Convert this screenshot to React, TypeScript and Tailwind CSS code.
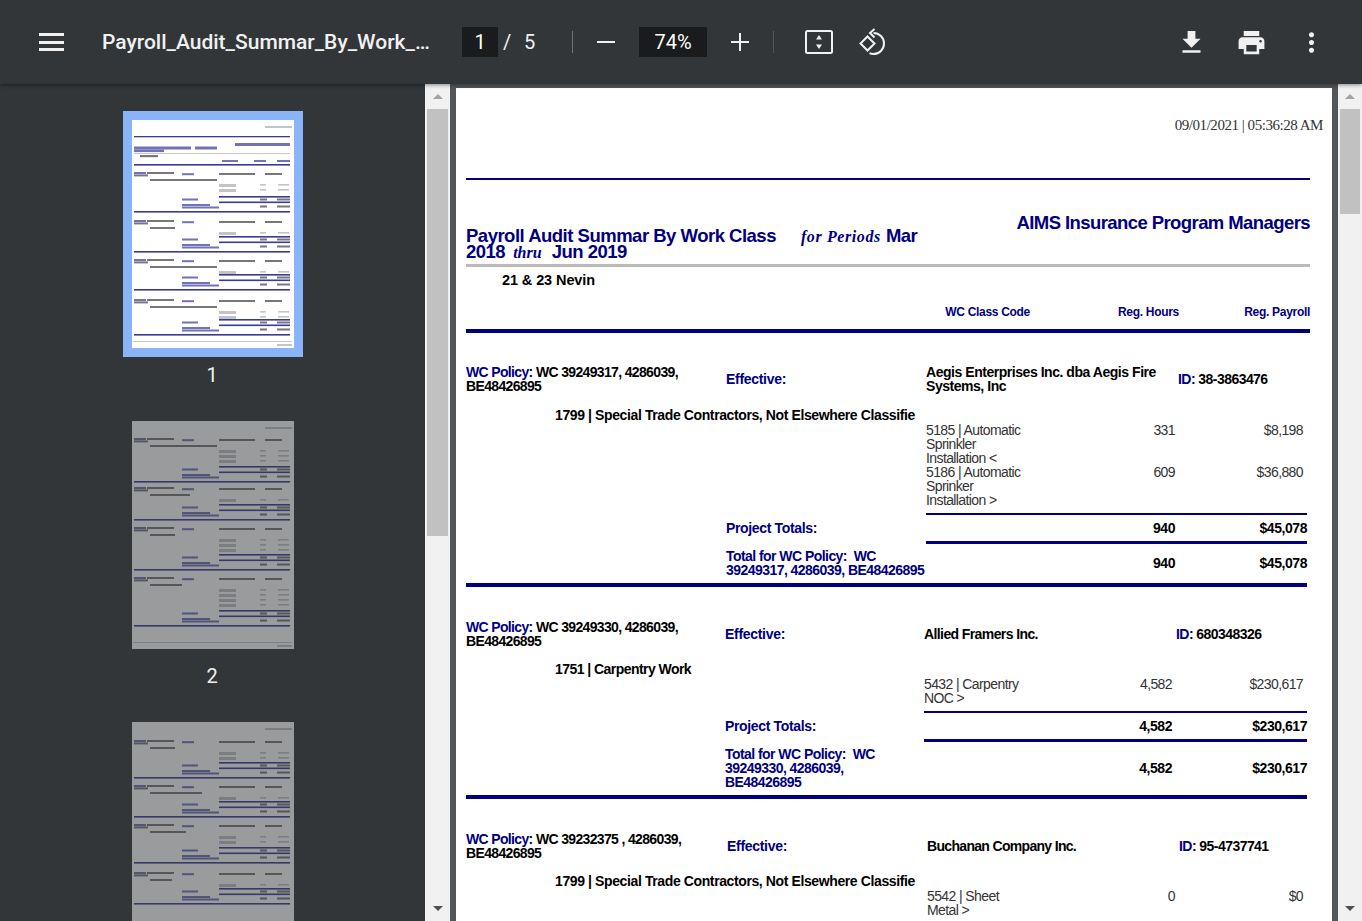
import { Fragment } from "react";

const NAVY = "text-[#000080]";

type SectionProps = {
  policy: string;
  company: string[];
  companyClass: string;
  id: string;
  classLine: string;
  details: { lines: string[]; hours: string; pay: string }[];
  totalLines: string[];
  hours: string;
  pay: string;
  headGrid: string;
  rowLeft: string;
  rowGrid: string;
  labelLeft: string;
  labelGrid: string;
  sectionTop: string;
  classTop: string;
};

function Lines({ lines }: { lines: string[] }) {
  return (
    <>
      {lines.map((l, i) => (
        <Fragment key={i}>
          {i > 0 && <br />}
          {l}
        </Fragment>
      ))}
    </>
  );
}

function PolicySection(p: SectionProps) {
  return (
    <section className={`w-[841px] text-[14px] leading-[14px] tracking-[-0.35px] ${p.sectionTop}`}>
      {/* policy header */}
      <div className={`grid items-center font-bold text-black ${p.headGrid}`}>
        <div className="tracking-[-0.65px]">
          <span className={NAVY}>WC Policy:</span> {p.policy}
          <br />
          BE48426895
        </div>
        <div className={`${NAVY} tracking-[-0.3px]`}>Effective:</div>
        <div className={`whitespace-nowrap ${p.companyClass}`}>
          <Lines lines={p.company} />
        </div>
        <div className="whitespace-nowrap tracking-[-0.55px]">
          <span className={NAVY}>ID:</span> {p.id}
        </div>
      </div>

      <div className={`pl-[89px] font-bold text-black whitespace-nowrap ${p.classTop}`}>{p.classLine}</div>

      {/* detail rows */}
      <div className={`mt-px text-[#333333] tracking-[-0.6px] ${p.rowLeft}`}>
        {p.details.map((d) => (
          <div key={d.lines[0]} className={`grid ${p.rowGrid}`}>
            <div className="whitespace-nowrap">
              <Lines lines={d.lines} />
            </div>
            <div className="text-right">{d.hours}</div>
            <div className="text-right pr-1">{d.pay}</div>
          </div>
        ))}
      </div>

      <div className={`mt-1.5 h-[2px] bg-[#000080] ${p.rowLeft}`} />
      <div className={`mt-1.5 font-bold ${p.labelLeft}`}>
        <div className={`grid ${p.labelGrid}`}>
          <div className={NAVY}>Project Totals:</div>
          <div className="text-right text-black tracking-[-0.45px]">{p.hours}</div>
          <div className="text-right text-black tracking-[-0.45px]">{p.pay}</div>
        </div>
      </div>
      <div className={`mt-1.5 h-[3px] bg-[#000080] ${p.rowLeft}`} />
      <div className={`mt-[5px] font-bold ${p.labelLeft}`}>
        <div className={`grid items-center ${p.labelGrid}`}>
          <div className={`${NAVY} whitespace-pre tracking-[-0.55px]`}>
            <Lines lines={p.totalLines} />
          </div>
          <div className="text-right text-black tracking-[-0.45px]">{p.hours}</div>
          <div className="text-right text-black tracking-[-0.45px]">{p.pay}</div>
        </div>
      </div>
      <div className="mt-1.5 h-1 bg-[#000080]" />
    </section>
  );
}

const T_DARK = "#77777c";
const T_BLUE = "#7272b8";
const T_GREY = "#c4c4c6";
const T_LINE = "#3a3a98";

// thumbnails are tiny and unreadable, so they are drawn as soft bars
function ThumbSection({ y, h, classW }: { y: number; h: number; classW: number }) {
  const rows: number[] = [];
  for (let r = y + 12; r < y + h - 17; r += 5) rows.push(r);
  return (
    <g>
      <rect x={2} y={y} width={12} height={2} fill={T_BLUE} />
      <rect x={15} y={y} width={27} height={2} fill={T_DARK} />
      <rect x={2} y={y + 2.4} width={14} height={2} fill={T_DARK} />
      <rect x={50} y={y + 1.2} width={12} height={2} fill={T_BLUE} />
      <rect x={87} y={y + 1} width={36} height={2} fill={T_DARK} />
      <rect x={133} y={y + 1} width={17} height={2} fill={T_DARK} />
      <rect x={18} y={y + 7} width={classW} height={2} fill={T_DARK} />
      {rows.map((r) => (
        <g key={r} fill={T_GREY}>
          <rect x={87} y={r} width={17} height={3} />
          <rect x={128} y={r} width={6} height={1.6} />
          <rect x={146} y={r} width={11} height={1.6} />
        </g>
      ))}
      <rect x={87} y={y + h - 15} width={71} height={1.6} fill={T_LINE} />
      <rect x={50} y={y + h - 12.5} width={16} height={2} fill={T_BLUE} />
      <rect x={128} y={y + h - 12.5} width={7} height={2} fill={T_DARK} />
      <rect x={145} y={y + h - 12.5} width={13} height={2} fill={T_DARK} />
      <rect x={87} y={y + h - 9.5} width={71} height={1.6} fill={T_LINE} />
      <rect x={50} y={y + h - 7} width={28} height={2} fill={T_BLUE} />
      <rect x={50} y={y + h - 4.5} width={37} height={2} fill={T_BLUE} />
      <rect x={128} y={y + h - 5.5} width={7} height={2} fill={T_DARK} />
      <rect x={145} y={y + h - 5.5} width={13} height={2} fill={T_DARK} />
      <rect x={2} y={y + h} width={156} height={1.6} fill={T_LINE} />
    </g>
  );
}

function Thumb({ sections, first }: { sections: { y: number; h: number; classW: number }[]; first?: boolean }) {
  return (
    <svg viewBox="0 0 162 228" className="block w-[162px] h-[228px] bg-white">
      <rect x={133} y={6} width={27} height={2} fill={T_GREY} />
      {first && (
        <g>
          <rect x={2} y={16} width={156} height={1.3} fill={T_LINE} />
          <rect x={2} y={26.5} width={57} height={3} fill={T_BLUE} />
          <rect x={63} y={26.5} width={22} height={3} fill={T_BLUE} />
          <rect x={2} y={29.5} width={30} height={2.6} fill={T_BLUE} />
          <rect x={103} y={23} width={55} height={3} fill={T_BLUE} />
          <rect x={2} y={33} width={156} height={1} fill="#c8c8c8" />
          <rect x={8} y={35} width={18} height={2.2} fill={T_DARK} />
          <rect x={90} y={40} width={16} height={2} fill={T_BLUE} />
          <rect x={122} y={40} width={12} height={2} fill={T_BLUE} />
          <rect x={145} y={40} width={13} height={2} fill={T_BLUE} />
          <rect x={2} y={44} width={156} height={1.6} fill={T_LINE} />
        </g>
      )}
      {sections.map((s) => (
        <ThumbSection key={s.y} {...s} />
      ))}
      <rect x={1} y={221} width={159} height={1} fill="#c8c8c8" />
      <rect x={145} y={224} width={15} height={2} fill={T_GREY} />
    </svg>
  );
}

function Scrollbar({ thumb, className }: { thumb: string; className: string }) {
  return (
    <div className={`flex flex-col shrink-0 bg-[#f1f1f1] ${className}`}>
      <div className="h-[25px] shrink-0 flex items-center justify-center">
        <div className="w-0 h-0 border-x-[5px] border-x-transparent border-b-[5px] border-b-[#a3a3a3]" />
      </div>
      <div className={`mx-0.5 bg-[#c1c1c1] ${thumb}`} />
      <div className="mt-auto h-[25px] shrink-0 flex items-center justify-center">
        <div className="w-0 h-0 border-x-[5px] border-x-transparent border-t-[5px] border-t-[#505050]" />
      </div>
    </div>
  );
}

export default function App() {
  return (
    <div className="h-screen overflow-hidden flex flex-col bg-[#323639] font-['Liberation_Sans',sans-serif]">
      {/* Toolbar */}
      <header className="relative z-10 h-[84px] shrink-0 flex items-center bg-[#323639] text-white shadow-[0_1px_4px_rgba(0,0,0,0.45)] font-['Roboto',sans-serif]">
        <div className="ml-[39px] w-[25px] h-[18px] flex flex-col justify-between">
          <div className="h-[3px] bg-[#f1f1f1]" />
          <div className="h-[3px] bg-[#f1f1f1]" />
          <div className="h-[3px] bg-[#f1f1f1]" />
        </div>
        <div className="ml-[38px] w-[328px] pt-0.5 truncate text-[21px] font-medium text-[#f1f1f1]">
          Payroll_Audit_Summar_By_Work_Class.pdf
        </div>
        <div className="ml-[32px] w-9 h-[30px] bg-[#191b1c] flex items-center justify-center text-[20px]">1</div>
        <div className="ml-[5px] w-[6px] text-[20px] text-[#f1f1f1]">/</div>
        <div className="ml-[15px] w-3 text-[20px] text-[#f1f1f1]">5</div>
        <div className="ml-[36px] w-px h-[22px] bg-[#6f7275]" />
        <div className="ml-[24px] w-[18px] h-[2px] bg-[#f1f1f1]" />
        <div className="ml-[24px] w-[68px] h-[30px] bg-[#191b1c] flex items-center justify-center text-[20px]">74%</div>
        <svg viewBox="0 0 18 18" className="ml-6 w-[18px] h-[18px]" fill="none" stroke="#f1f1f1" strokeWidth="2">
          <path d="M9 0v18M0 9h18" />
        </svg>
        <div className="ml-[24px] w-px h-[22px] bg-[#55585b]" />
        {/* fit to page */}
        <svg viewBox="0 0 28 24" className="ml-[31px] w-7 h-6" fill="none">
          <rect x="1" y="1" width="26" height="22" rx="1.5" stroke="#f1f1f1" strokeWidth="2" />
          <path d="M14 5l3 4.5h-6zM14 19l3-4.5h-6z" fill="#f1f1f1" />
        </svg>
        {/* rotate */}
        <svg viewBox="0 0 28 28" className="ml-[26px] w-7 h-7" fill="none" stroke="#f1f1f1" strokeWidth="2">
          <path d="M8.5 8.5l7 7-7 7-7-7z" />
          <path d="M14.5 5a10.5 10.5 0 0 1 0 21 10 10 0 0 1-4-.8" />
          <path d="M15.5 1l-4.5 4 4.5 4.5" />
        </svg>
        <svg viewBox="0 0 24 24" className="ml-auto w-[31px] h-[31px]" fill="#f1f1f1">
          <path d="M19 9h-4V3H9v6H5l7 7 7-7zM5 18v2h14v-2H5z" />
        </svg>
        <svg viewBox="0 0 24 24" className="ml-[29px] w-[31px] h-[31px]" fill="#f1f1f1">
          <path d="M19 8H5c-1.66 0-3 1.34-3 3v6h4v4h12v-4h4v-6c0-1.66-1.34-3-3-3zm-3 11H8v-5h8v5zm3-7c-.55 0-1-.45-1-1s.45-1 1-1 1 .45 1 1-.45 1-1 1zm-1-9H6v4h12V3z" />
        </svg>
        <svg viewBox="0 0 24 24" className="ml-[29px] mr-[35px] w-[31px] h-[31px]" fill="#f1f1f1">
          <path d="M12 8c1.1 0 2-.9 2-2s-.9-2-2-2-2 .9-2 2 .9 2 2 2zm0 2c-1.1 0-2 .9-2 2s.9 2 2 2 2-.9 2-2-.9-2-2-2zm0 6c-1.1 0-2 .9-2 2s.9 2 2 2 2-.9 2-2-.9-2-2-2z" />
        </svg>
      </header>

      <div className="flex-1 min-h-0 flex">
        {/* Thumbnail sidebar */}
        <aside className="w-[425px] shrink-0 overflow-hidden flex flex-col items-center pt-[27px] font-['Roboto',sans-serif] text-[#f1f1f1] text-[20px] pl-px">
          <div className="border-[9px] border-[#8ab4f8]">
            <Thumb
              first
              sections={[
                { y: 52, h: 39, classW: 67 },
                { y: 100, h: 31, classW: 25 },
                { y: 139, h: 30, classW: 67 },
                { y: 179, h: 35, classW: 67 },
              ]}
            />
          </div>
          <div className="mt-[6px] pr-0.5 leading-[24px]">1</div>
          <div className="mt-[34px] opacity-50">
            <Thumb
              sections={[
                { y: 17, h: 43, classW: 67 },
                { y: 66, h: 32, classW: 40 },
                { y: 106, h: 42, classW: 25 },
                { y: 156, h: 48, classW: 32 },
              ]}
            />
          </div>
          <div className="mt-[15px] pr-0.5 leading-[24px]">2</div>
          <div className="mt-[34px] shrink-0 opacity-50">
            <Thumb
              sections={[
                { y: 18, h: 37, classW: 25 },
                { y: 63, h: 31, classW: 52 },
                { y: 102, h: 38, classW: 36 },
                { y: 150, h: 31, classW: 22 },
              ]}
            />
          </div>
        </aside>
        <Scrollbar className="w-[25px]" thumb="h-[427px]" />

        {/* Document view */}
        <main className="flex-1 min-w-0 overflow-hidden bg-[#525659] pt-1 px-1.5">
          <div className="w-[876px] h-[900px] bg-white pl-2.5 overflow-hidden">
            <div className="pt-[29px] pr-[9px] text-right text-[#333333] text-[15px] leading-4 tracking-[-0.46px] font-['Liberation_Serif',serif]">
              09/01/2021 | 05:36:28 AM
            </div>
            <div className="w-[844px] mt-[45px] h-[2px] bg-[#000080]" />

            <div className="w-[844px] flex items-start justify-between mt-[33px]">
              <div className={`w-[456px] mt-[15px] font-bold text-[18.5px] leading-[15px] tracking-[-0.5px] ${NAVY}`}>
                Payroll Audit Summar By Work Class
                <span className="font-['Liberation_Serif',serif] italic text-[16px] tracking-[0.6px] ml-[25px] mr-[5px]">for Periods</span>
                Mar 2018
                <span className="font-['Liberation_Serif',serif] italic text-[16px] tracking-normal ml-[8px] mr-[10px]">thru</span>
                Jun 2019
              </div>
              <div className={`font-bold text-[18.5px] leading-5 tracking-[-0.58px] ${NAVY}`}>AIMS Insurance Program Managers</div>
            </div>
            <div className="w-[844px] mt-[4px] h-[3px] bg-[#bbbbbb]" />
            <div className="mt-[5px] pl-9 text-[14.5px] leading-4 font-bold text-black tracking-[-0.1px]">21 &amp; 23 Nevin</div>

            <div className={`w-[844px] mt-[17px] grid grid-cols-[564px_149px_131px] text-right text-[12px] leading-[14px] font-bold tracking-[-0.3px] ${NAVY}`}>
              <div>WC Class Code</div>
              <div>Reg. Hours</div>
              <div>Reg. Payroll</div>
            </div>
            <div className="w-[844px] mt-[10px] h-1 bg-[#000080]" />

            <PolicySection
              sectionTop="mt-8"
              classTop="mt-[15px] tracking-[-0.39px]"
              headGrid="grid-cols-[260px_200px_252px_1fr]"
              rowLeft="ml-[460px]"
              labelLeft="ml-[260px]"
              rowGrid="grid-cols-[auto_1fr_132px]"
              labelGrid="grid-cols-[auto_1fr_132px]"
              companyClass="tracking-[-0.46px]"
              policy="WC 39249317, 4286039,"
              company={["Aegis Enterprises Inc. dba Aegis Fire", "Systems, Inc"]}
              id="38-3863476"
              classLine="1799 | Special Trade Contractors, Not Elsewhere Classifie"
              details={[
                { lines: ["5185 | Automatic", "Sprinkler", "Installation <"], hours: "331", pay: "$8,198" },
                { lines: ["5186 | Automatic", "Sprinker", "Installation >"], hours: "609", pay: "$36,880" },
              ]}
              totalLines={["Total for WC Policy:  WC", "39249317, 4286039, BE48426895"]}
              hours="940"
              pay="$45,078"
            />
            <PolicySection
              sectionTop="mt-[33px]"
              classTop="mt-3.5 tracking-[-0.55px]"
              headGrid="grid-cols-[259px_199px_252px_1fr]"
              rowLeft="ml-[458px]"
              labelLeft="ml-[259px]"
              rowGrid="grid-cols-[auto_1fr_135px]"
              labelGrid="grid-cols-[auto_1fr_135px]"
              companyClass="tracking-[-0.6px]"
              policy="WC 39249330, 4286039,"
              company={["Allied Framers Inc."]}
              id="680348326"
              classLine="1751 | Carpentry Work"
              details={[{ lines: ["5432 | Carpentry", "NOC >"], hours: "4,582", pay: "$230,617" }]}
              totalLines={["Total for WC Policy:  WC", "39249330, 4286039,", "BE48426895"]}
              hours="4,582"
              pay="$230,617"
            />
            <PolicySection
              sectionTop="mt-[33px]"
              classTop="mt-3.5 tracking-[-0.39px]"
              headGrid="grid-cols-[261px_200px_252px_1fr]"
              rowLeft="ml-[461px]"
              labelLeft="ml-[261px]"
              rowGrid="grid-cols-[auto_1fr_132px]"
              labelGrid="grid-cols-[auto_1fr_132px]"
              companyClass="tracking-[-0.68px]"
              policy="WC 39232375 , 4286039,"
              company={["Buchanan Company Inc."]}
              id="95-4737741"
              classLine="1799 | Special Trade Contractors, Not Elsewhere Classifie"
              details={[{ lines: ["5542 | Sheet", "Metal >"], hours: "0", pay: "$0" }]}
              totalLines={["Total for WC Policy:  WC", "39232375 , 4286039,", "BE48426895"]}
              hours="0"
              pay="$0"
            />
          </div>
        </main>
        <Scrollbar className="w-6" thumb="h-[105px]" />
      </div>
    </div>
  );
}
